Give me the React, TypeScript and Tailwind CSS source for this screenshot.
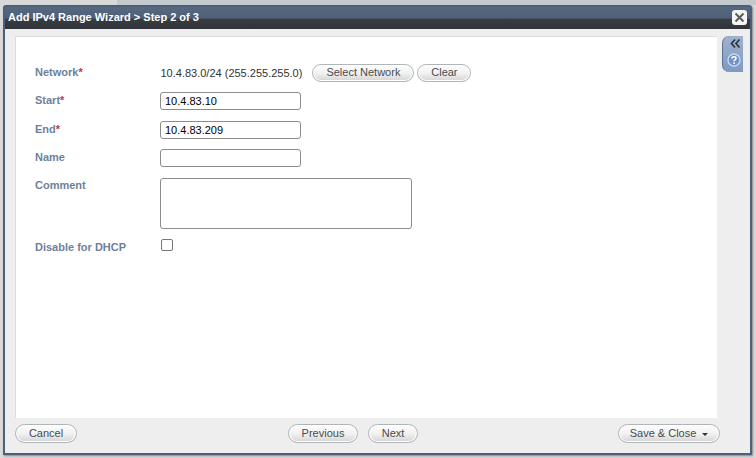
import React from 'react';

const pillClass =
  'flex items-center justify-center rounded-full border border-[#b0b5b8] bg-gradient-to-b from-[#fdfdfd] via-[#f2f2f2] to-[#d4d4d4] text-[11px] leading-none text-[#4a4a4a] shadow-[inset_0_0_0_1px_#fff]';

function Pill({ width, children }: { width: string; children: React.ReactNode }) {
  return (
    <button type="button" className={`${pillClass} ${width}`}>
      <span className="-mt-[1px] flex items-center">{children}</span>
    </button>
  );
}

function Label({ text, required, className }: { text: string; required?: boolean; className?: string }) {
  return (
    <label className={`w-[125px] shrink-0 text-[11px] leading-[14px] font-bold text-[#6f7f9b] ${className ?? ''}`}>
      {text}
      {required && <span className="text-[#c0393b]">*</span>}
    </label>
  );
}

const inputClass =
  'w-[141px] h-[18px] rounded-[3px] border border-[#8c8c8c] bg-white px-[4px] text-[11px] text-black outline-none';

export default function App() {
  return (
    <div className="relative h-[458px] w-[756px] overflow-hidden bg-[#d9d9d9] pt-[5px] pl-[3px] font-['Liberation_Sans',Arial,sans-serif]">
      <div className="absolute right-0 top-0 h-[5px] w-[639px] bg-[#c3cacd]" />
      <div className="relative flex h-[450px] w-[749px] flex-col rounded-t-[3px] border-[2px] border-[#4d6079] bg-[#eeeeee] shadow-[1px_1px_2px_#888]">
        <div className="flex h-[22px] shrink-0 justify-between bg-[linear-gradient(#56697f_0%,#4f6078_50%,#383d42_56%,#30343a_100%)] pl-[3px]">
          <span className="mt-[3px] text-[11px] leading-[14px] font-bold text-white">
            Add IPv4 Range Wizard &gt; Step 2 of 3
          </span>
          <button
            type="button"
            className="mr-[3px] mt-[3px] flex h-[15px] w-[15px] items-center justify-center rounded-[3px] bg-[#f5f5f5] shadow-[0_0_1px_#555]"
          >
            <svg width="11" height="11" viewBox="0 0 11 11">
              <path d="M1.5 1.5 L9.5 9.5 M9.5 1.5 L1.5 9.5" stroke="#5c5c5c" strokeWidth="2" />
            </svg>
          </button>
        </div>

        <div className="flex min-h-0 flex-1 pl-[10px] pt-[7px]">
          <div className="h-[382px] w-[702px] shrink-0 border-t border-l border-[#dcdcdc] bg-white pl-[19px] pt-[27px]">
            <div className="flex h-[18px] items-center">
              <Label text="Network" required className="-mt-[2px]" />
              <span className="ml-[0.5px] text-[11px] leading-[14px] text-[#333]">10.4.83.0/24 (255.255.255.0)</span>
              <div className="ml-[10px] flex h-[18px] gap-[3px]">
                <Pill width="w-[102px]">Select Network</Pill>
                <Pill width="w-[54px]">Clear</Pill>
              </div>
            </div>
            <div className="mt-[10px] flex h-[18px] items-center">
              <Label text="Start" required className="-mt-[3px]" />
              <input className={inputClass} defaultValue="10.4.83.10" />
            </div>
            <div className="mt-[11px] flex h-[18px] items-center">
              <Label text="End" required className="-mt-[3px]" />
              <input className={inputClass} defaultValue="10.4.83.209" />
            </div>
            <div className="mt-[10px] flex h-[18px] items-center">
              <Label text="Name" className="-mt-[3px]" />
              <input className={inputClass} />
            </div>
            <div className="mt-[11px] flex items-start">
              <Label text="Comment" />
              <textarea className="h-[51px] w-[252px] resize-none rounded-[3px] border border-[#8c8c8c] bg-white outline-none" />
            </div>
            <div className="mt-[9px] flex items-center">
              <Label text="Disable for DHCP" className="mt-[2px]" />
              <div className="-mt-[3px] ml-[1px] h-[12px] w-[12px] rounded-[2px] border border-[#777] bg-white" />
            </div>
          </div>

          <div className="ml-[5px] flex h-[36px] w-[21px] flex-col items-center rounded-l-[7px] border-l border-[#5d7190] bg-gradient-to-b from-[#9fb2cd] to-[#7f9ac3] pt-[2px]">
            <svg width="11" height="11" viewBox="0 0 11 11" className="ml-[4px]">
              <path d="M5 1.5 L1.5 5.5 L5 9.5 M9.5 1.5 L6 5.5 L9.5 9.5" fill="none" stroke="#2c3442" strokeWidth="1.7" />
            </svg>
            <svg width="14" height="14" viewBox="0 0 14 14" className="ml-[1px] mt-[4px]">
              <circle cx="7" cy="7" r="6" fill="#6f93c6" stroke="#c9d8ec" strokeWidth="1.3" />
              <path d="M5 5.4 C5 3.2 9 3.2 9 5.4 C9 6.8 7 6.8 7 8.2" fill="none" stroke="#fff" strokeWidth="1.5" />
              <circle cx="7" cy="10.2" r="0.9" fill="#fff" />
            </svg>
          </div>
        </div>

        <div className="relative flex h-[34px] shrink-0 items-start justify-between pl-[10px] pr-[30px] pt-[5px]">
          <div className="flex h-[19px]">
            <Pill width="w-[62px]">Cancel</Pill>
          </div>
          <div className="absolute left-[283px] top-[5px] flex h-[19px] gap-[10px]">
            <Pill width="w-[70px]">Previous</Pill>
            <Pill width="w-[50px]">Next</Pill>
          </div>
          <div className="flex h-[19px]">
            <Pill width="w-[102px]">
              Save &amp; Close
              <span className="ml-[6px] mt-[3px] h-0 w-0 border-x-[3px] border-t-[3px] border-x-transparent border-t-[#333]" />
            </Pill>
          </div>
        </div>
      </div>
    </div>
  );
}
